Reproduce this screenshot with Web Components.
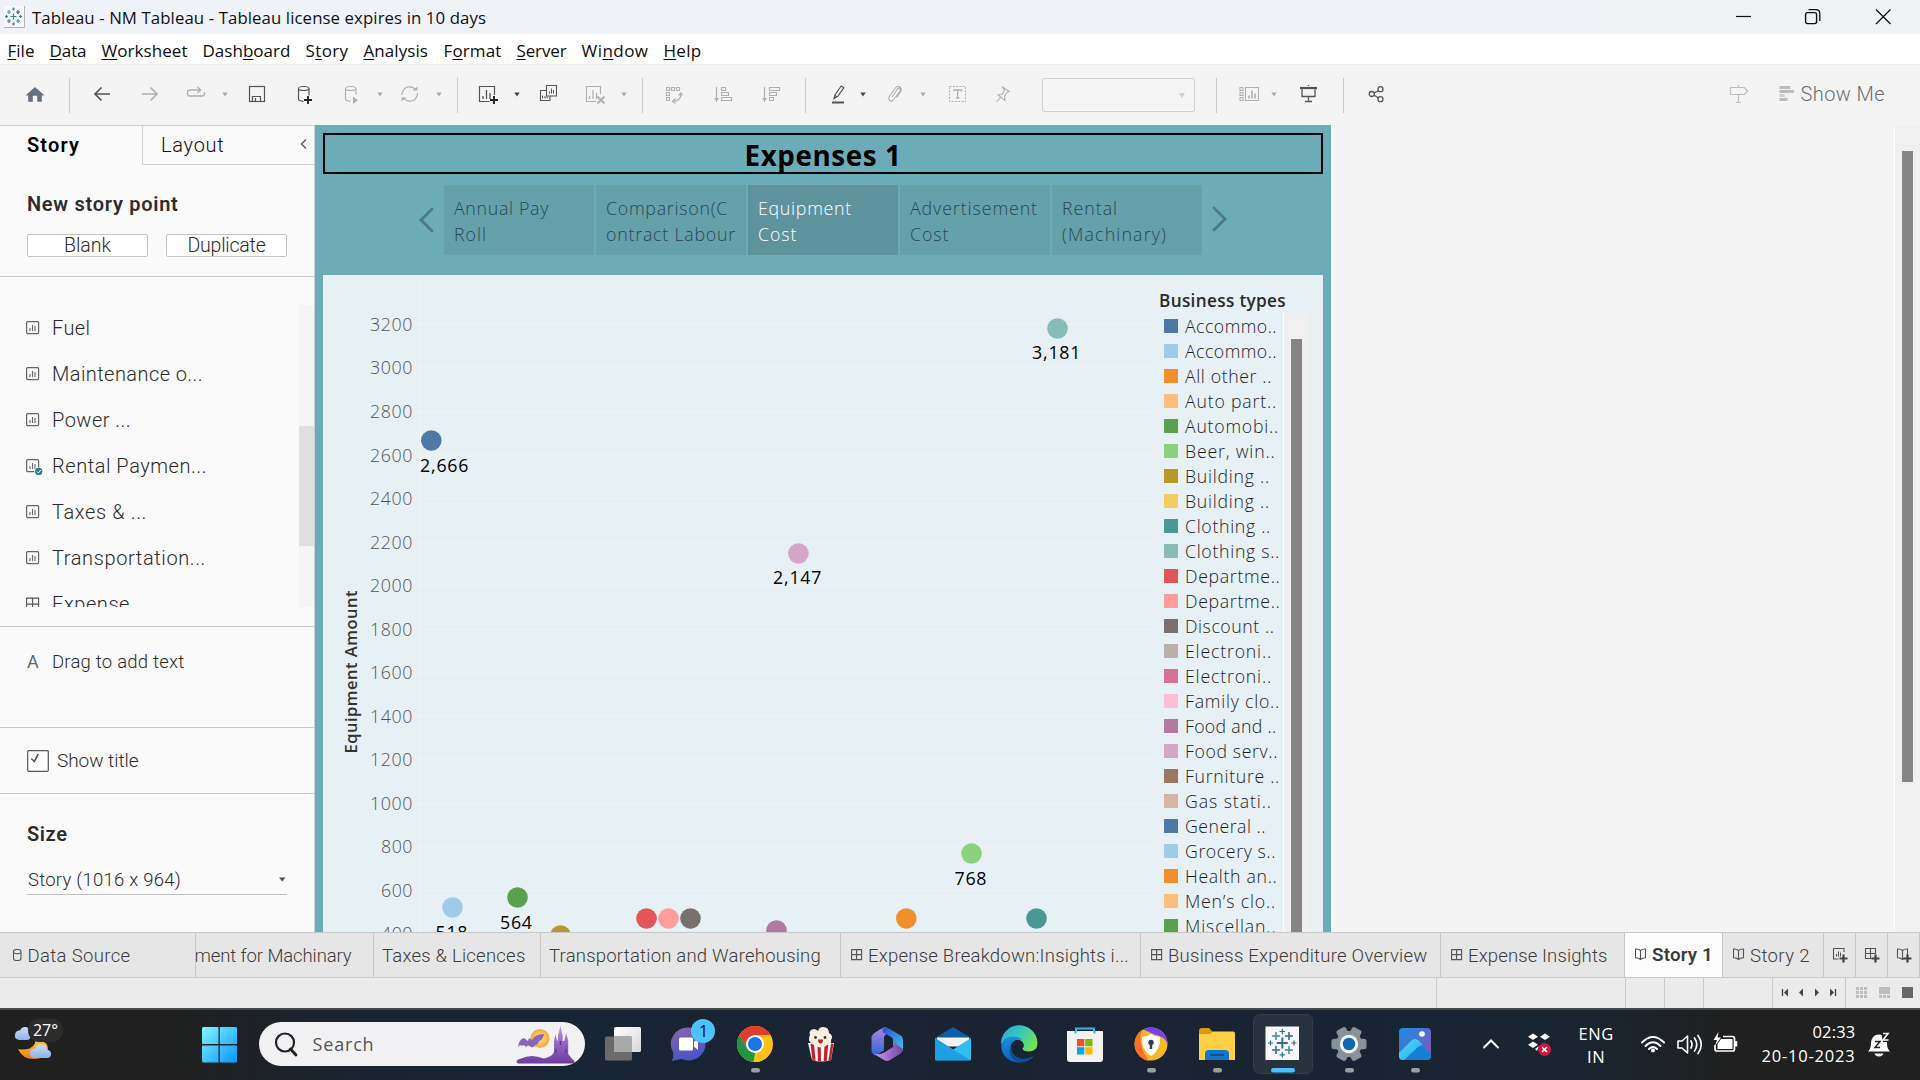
<!DOCTYPE html>
<html lang="en">
<head>
<meta charset="utf-8">
<title>Tableau - NM Tableau</title>
<style>
html,body{margin:0;padding:0;width:1920px;height:1080px;overflow:hidden;background:#f4f4f4}
body{font-family:"Open Sans","Liberation Sans",sans-serif}
</style>
</head>
<body>
<tableau-desktop></tableau-desktop>
<script>
const UI = '"Open Sans","Liberation Sans",sans-serif';
const BENTON = 'Roboto,"Liberation Sans",sans-serif';

// A shadow-rooted element whose markup and box rules are given by its class.
class Base extends HTMLElement {
  connectedCallback() {
    if (this.shadowRoot) return;
    this.attachShadow({ mode: 'open' }).innerHTML =
      `<style>*{box-sizing:border-box}svg{display:block;flex:none}${this.css()}</style>${this.html()}`;
    this.ready && this.ready();
  }
}

// One line of text tracked to a given advance width.
customElements.define('fit-text', class extends Base {
  css() { return ':host{display:block;flex:none;white-space:pre;position:static}span{display:inline-block}'; }
  html() { return '<span><slot></slot></span>'; }
  ready() {
    const w = +this.getAttribute('w'); if (!w) return;
    const s = this.shadowRoot.querySelector('span');
    const n = this.textContent.length;
    s.style.letterSpacing = ((w - s.getBoundingClientRect().width) / n).toFixed(3) + 'px';
  }
});

const T = (w, t, st = '') => `<fit-text w="${w}" style="${st}">${t}</fit-text>`;
// Lays [x, width, markup] items along a flex row, from a starting x.
const flow = (start, items) => {
  let p = start;
  return items.map(([x, w, m]) => { const g = x - p; p = x + w;
    return `<div class="it" style="margin-left:${g.toFixed(1)}px;width:${w}px">${m}</div>`; }).join('');
};
const pic = (x, y, w, h, m) => [x, w, `<svg width="${w}" height="${h}" viewBox="${x} ${y} ${w} ${h}" fill="none">${m}</svg>`];

customElements.define('title-bar', class extends Base {
  css() { return `:host{display:flex;align-items:center;height:34px;background:linear-gradient(90deg,#eff3f9,#eff3f8 60%,#f1f2f6);font:400 16.8px/34px ${UI};color:#101010}.it{flex:none}`; }
  html() {
    const plus = (x, y, r, c) => `<path d="M${x - r} ${y}h${2 * r}M${x} ${y - r}v${2 * r}" stroke="${c}" stroke-width="1.2"/>`;
    return flow(0, [
      pic(3, 0, 22, 34, `<path d="M4 6h20v21H4z" fill="#f8f8f8"/><path d="M4 27.5h20.5V6" stroke="#b5b5b5"/>` +
        plus(13.5, 16.5, 3, '#3c7fae') + plus(9, 12, 2, '#3c9ac8') + plus(18, 12, 2, '#2f6f9f') + plus(9, 21, 2, '#3c7fae') + plus(18, 21, 2, '#3c9ac8') + plus(13.5, 9, 1.5, '#3c7fae') + plus(13.5, 24, 1.5, '#3c7fae') + plus(6.5, 16.5, 1.5, '#3c7fae') + plus(20.5, 16.5, 1.5, '#3c7fae')),
      [32, 454, T(454, 'Tableau - NM Tableau - Tableau license expires in 10 days', 'padding-top:1px')],
      pic(1736, 0, 16, 34, '<path d="M1736 16.5h15" stroke="#111" stroke-width="1.2"/>'),
      pic(1804, 0, 18, 34, '<rect x="1805.6" y="12.6" width="11" height="11" rx="2" stroke="#111" stroke-width="1.4"/><path d="M1808.500 9.700h7.500q3.800 0 3.800 3.800v7.500" stroke="#111" stroke-width="1.3"/>'),
      pic(1875, 0, 17, 34, '<path d="M1876 9.500l14.500 14.500M1890.500 9.500l-14.500 14.500" stroke="#111" stroke-width="1.3"/>')
    ]);
  }
});

customElements.define('menu-bar', class extends Base {
  css() { return `:host{display:flex;height:30px;padding-top:2px;background:#fff;font:400 17px/29px ${UI};color:#0c0c0c}.it{flex:none}u{text-underline-offset:2px;text-decoration-thickness:1px;text-decoration-skip-ink:none}`; }
  html() {
    return flow(0, [['<u>F</u>ile', 7.5, 27], ['<u>D</u>ata', 49.5, 37], ['<u>W</u>orksheet', 101.5, 86], ['Dash<u>b</u>oard', 202.5, 88], ['S<u>t</u>ory', 305.5, 43], ['<u>A</u>nalysis', 363.5, 64.5], ['F<u>o</u>rmat', 443.5, 58], ['<u>S</u>erver', 516.5, 50], ['Wi<u>n</u>dow', 581.5, 67], ['<u>H</u>elp', 663.5, 38]].map(([t, x, w]) => [x, w, T(w, t)]));
  }
});

customElements.define('tool-bar', class extends Base {
  css() { return `:host{display:flex;height:61px;background:#f4f4f4;border-top:1px solid #ececec;font:300 20px/60px ${BENTON};color:#6f6f6f}.it{flex:none}.combo{width:153px;height:34px;margin-top:13px;border:1.5px solid #d2d2d2;border-radius:2px;background:#f5f5f5;padding:14px 9px 0 0;display:flex;justify-content:flex-end}.combo i{width:0;height:0;border:3.5px solid transparent;border-top:5px solid #cfcfcf;border-bottom:0}`; }
  html() {
    const p = (x, w, m) => pic(x, 65, w, 60, m);
    const sep = x => p(x, 2, `<path d="M${x + .5} 78v35" stroke="#c9c9c9"/>`);
    const car = (x, c = '#a9a9a9') => p(x - 3, 7, `<path d="M${x - 2.7} 92.500h5.400l-2.700 4z" fill="${c}"/>`);
    const D = '#555', L = '#b0b0b0';
    return flow(0, [
      p(25, 20, '<path d="M35 87l9.500 8.500h-2.700v6.300h-4.600v-6h-4.400v6h-4.600v-6.300h-2.700z" fill="#66707e"/>'),
      sep(69),
      p(93, 18, `<path d="M110 94H95.500M101.500 87.500L95 94l6.500 6.500" stroke="${D}" stroke-width="1.7"/>`),
      p(141, 18, `<path d="M142 94h14.500M150.500 87.500L157 94l-6.500 6.500" stroke="${L}" stroke-width="1.7"/>`),
      p(186, 20, `<path d="M200 90h-10q-2.500 0-2.500 2.500v1q0 2.500 2.500 2.500h12q2.500 0 2.500-2.500v-1.500M197.500 87l3.300 3-3.300 3" stroke="${L}" stroke-width="1.3"/>`),
      car(225),
      p(248, 18, `<rect x="249.500" y="86.500" width="15" height="15" stroke="${D}" stroke-width="1.2"/><path d="M252.500 101v-4.500h8v4.500M255.500 98v3" stroke="${D}" stroke-width="1.2"/>`),
      p(297, 17, `<path d="M298.500 88.500v10.500q0 2 5 2.300M309 88.500v7" stroke="${D}" stroke-width="1.2"/><ellipse cx="303.700" cy="88.500" rx="5.200" ry="2" stroke="${D}" stroke-width="1.1"/><path d="M304 100h8M308 96v8" stroke="#222" stroke-width="1.9"/>`),
      p(344, 16, `<path d="M345.500 88.500v10.500q0 2 5 2.300M356 88.500v6" stroke="${L}" stroke-width="1.2"/><ellipse cx="350.700" cy="88.500" rx="5.200" ry="2" stroke="${L}" stroke-width="1.1"/><path d="M353 96.500l5 3.700-5 3.700z" fill="${L}"/>`),
      car(380),
      p(400, 20, `<path d="M403 91a7 6.500 0 0 1 12.500-1M416.500 97a7 6.500 0 0 1-12.500 1M402 95a7 7 0 0 1 1-4M417.500 93a7 7 0 0 1-1 4" stroke="${L}" stroke-width="1.2"/><path d="M412.500 90.500h5v-4zM406.500 97.500h-5v4z" fill="${L}"/>`),
      car(439), sep(457),
      p(478, 21, `<path d="M494.500 95v-8.500h-15v15h10" stroke="${D}" stroke-width="1.2"/><path d="M483 99v-3M486.500 99v-9M490 99v-6" stroke="${D}" stroke-width="1.300"/><path d="M490 100h8M494 96v8" stroke="#222" stroke-width="1.900"/>`),
      car(517, '#444'),
      p(539, 19, `<path d="M546.500 85.500h10v10.500h-10zM546.500 90.500h-6v10h9.500v-4.500" stroke="${D}" stroke-width="1.100"/><path d="M549.500 93.500v-2M551.500 93.500v-5M553.500 93.500v-3.500M542.500 98.500v-3M545 98.500v-2.500M547.300 98.500v-2" stroke="${D}"/>`),
      p(585, 21, `<path d="M600.500 94v-7.500h-14v15h10" stroke="${L}" stroke-width="1.100"/><path d="M589.500 99v-3M593 99v-9M596.500 99v-6" stroke="${L}" stroke-width="1.200"/><path d="M597.500 96.500l7 7M604.500 96.500l-7 7" stroke="${L}" stroke-width="1.800"/>`),
      car(624), sep(642),
      p(664, 20, `<path d="M666.500 87.500h3v3h-3zM671.500 87.500h3v3h-3zM676.500 87.500h3v3h-3zM666.500 92.500h3v3h-3zM666.500 97.500h3v3h-3z" stroke="${L}" stroke-width="1.100"/><path d="M681 94q0 6.500-8 7.500M678.500 95.500l2.500-2.500 1.500 2.500M675.500 98.500l-3 3 3 2" stroke="${L}" stroke-width="1.200"/>`),
      p(713, 21, `<path d="M716.500 87v13" stroke="${L}" stroke-width="1.200"/><path d="M714 98h5l-2.500 4z" fill="${L}"/><path d="M721.500 87.500h4v3h-4zM721.500 92.500h7v3h-7zM721.500 97.500h10v3h-10z" stroke="${L}" stroke-width="1.100"/>`),
      p(761, 21, `<path d="M764.500 87v13" stroke="${L}" stroke-width="1.200"/><path d="M762 98h5l-2.500 4z" fill="${L}"/><path d="M769.500 87.500h10v3h-10zM769.500 92.500h7v3h-7zM769.500 97.500h4v3h-4z" stroke="${L}" stroke-width="1.100"/>`),
      sep(805),
      p(830, 18, `<path d="M834 98.500l1.200-4 6-8.500 2.600 1.800-6 8.500z M834.500 95l2.500 2" stroke="${D}" stroke-width="1.200"/><path d="M832 102.500h12" stroke="${D}" stroke-width="2"/>`),
      car(863, '#444'),
      p(887, 18, `<path d="M892 97l5.500-8q1.500-1.500 2.500-.5t0 2.500l-6.500 9q-2 2-3.700.5t-.5-4l6-8.500q2-2.500 4.500-1t1 4.500l-4 6" stroke="${L}" stroke-width="1.100"/>`),
      car(923),
      p(948, 20, `<rect x="949.500" y="86.500" width="16" height="15" stroke="${L}" stroke-dasharray="2 1.300"/><path d="M954 91.500v-1.500h7.500v1.500M957.700 90v8M956 98h3.500" stroke="${L}" stroke-width="1.300"/>`),
      p(995, 18, `<path d="M1002 86.500l7 5-2 1-2.500 3.500.5 4.500-7-5.500 4-.5 2.500-4zM1000.500 97.500l-4 4.500" stroke="${L}" stroke-width="1.100"/>`),
      [1042, 153, '<div class="combo"><i></i></div>'],
      sep(1216),
      p(1238, 22, `<path d="M1240 87.500h3v3h-3zM1240 92.500h3v3h-3zM1240 97.500h3v3h-3zM1245.500 87.500h13v13h-13z" stroke="${L}" stroke-width="1.100"/><path d="M1249 98.500v-3M1252 98.500v-8M1255 98.500v-5" stroke="${L}" stroke-width="1.600"/>`),
      car(1274),
      p(1299, 20, `<path d="M1300 88h17" stroke="${D}" stroke-width="2.200"/><path d="M1302 88v8.500h13V88M1308.500 86v-1M1308.500 96.500v5M1305 101.500h7" stroke="${D}" stroke-width="1.300"/>`),
      sep(1343),
      p(1367, 20, `<circle cx="1371.800" cy="94" r="2.500" stroke="${D}" stroke-width="1.300"/><circle cx="1380.500" cy="89.200" r="2.500" stroke="${D}" stroke-width="1.300"/><circle cx="1380.500" cy="99.200" r="2.500" stroke="${D}" stroke-width="1.300"/><path d="M1374.200 93l4-2.200M1374.200 95.300l4 2.400" stroke="${D}" stroke-width="1.300"/>`),
      p(1729, 20, `<path d="M1730.500 87.500h14l3 3.500-3 3.500h-14zM1738.500 87.500v-2.500M1738.500 94.500v7.500M1736 102.500h5" stroke="#bcbcbc" stroke-width="1.200"/>`),
      p(1778, 17, `<path d="M1779.500 86h11v3h-11zM1779.500 90h14.500v3h-14.500zM1779.500 98h8v3h-8z" fill="#bcbcbc"/><path d="M1779.500 94h5v3h-5z" fill="#cfcfcf"/>`),
      [1800.5, 85, T(84.5, 'Show Me', 'line-height:59px')]
    ]);
  }
});

const sheetIcon = (x, y, chk) => `<rect x="${x + .6}" y="${y + .6}" width="12" height="12" rx="1" stroke="#666" stroke-width="1.200"/><path d="M${x + 4} ${y + 10}v-3M${x + 6.500} ${y + 10}v-6M${x + 9} ${y + 10}v-5" stroke="#666" stroke-width="1.100"/>` + (chk ? `<circle cx="${x + 12.700}" cy="${y + 12.500}" r="4.300" fill="#fafafa"/><circle cx="${x + 12.700}" cy="${y + 12.500}" r="3.700" fill="#2f7ba0"/><path d="M${x + 10.900} ${y + 12.500}l1.500 1.500 2.400-3" stroke="#fff"/>` : '');
const dashIcon = (x, y, s) => `<path d="M${x + .6} ${y + .6}h${s}v${s}h-${s}zM${x + .6} ${y + .6 + s / 2}h${s}M${x + .6 + s / 2} ${y + .6}v${s}" stroke="#555" stroke-width="1.100"/>`;
const bookIcon = (x, y) => `<path d="M${x + 5.500} ${y + 2.500}v9M${x + 5.500} ${y + 2.500}q-2-1.800-5-1.500v8.700q3-.2 5 1.800q2-2 5-1.800V${y + 1}q-3-.3-5 1.500z" stroke="#555" stroke-width="1.100"/>`;

customElements.define('sheet-item', class extends Base {
  css() { return `:host{display:flex;align-items:center;height:46px;flex:none;padding-left:26px;gap:8px;font:300 20px/24px ${BENTON};color:#2c2c2c}`; }
  html() {
    const k = this.getAttribute('kind');
    return `<svg width="18" height="18" viewBox="0 2 18 18" fill="none">${k === 'dash' ? dashIcon(0, 4.500, 12) : sheetIcon(0, 4, k === 'used')}</svg><fit-text w="${this.getAttribute('w')}">${this.textContent}</fit-text>`;
  }
});

customElements.define('story-pane', class extends Base {
  css() { return `:host{display:flex;flex-direction:column;width:315px;flex:none;height:807px;background:#fafafa;border-right:1px solid #cfcfcf;border-top:1px solid #cfcfcf;font:300 20px/24px ${BENTON};color:#2c2c2c;overflow:hidden}
  .tabs{display:flex;height:39px;flex:none}.t1{width:142px;padding:7px 0 0 27px;font-weight:600;color:#000}.t2{flex:1;display:flex;justify-content:space-between;border-left:1px solid #cfcfcf;border-bottom:1px solid #cfcfcf;padding:7px 5px 0 18px;color:#111}
  section{flex:none;border-bottom:1px solid #cbcbcb}
  .new{height:112px;padding:27px 27px 0}h3{margin:0;font-size:20px;font-weight:600;line-height:24px;color:#2d2d2d}.btns{display:flex;gap:18px;margin-top:18px}
  .btn{width:121px;height:23px;border:1.200px solid #c4c4c4;border-radius:2px;background:#fff;display:flex;justify-content:center;line-height:21px;font-size:19.500px}
  .list{height:350px;padding:28px 0 0;display:flex}.items{height:302px;flex:1;overflow:hidden}.sb{width:15px;height:302px;background:#f5f5f5;padding-top:121px}.sb i{display:block;height:120px;background:#e0e0e0}
  .drag{height:101px;padding:23px 0 0 27px;display:flex;font-size:18.500px}.show{height:66px;display:flex;align-items:center;padding-left:27px;gap:8px;font-size:19px}
  .a{width:25px;color:#666;font-weight:400;font-size:18px}.size{padding:28px 27px 0}.sel{display:flex;justify-content:space-between;margin-top:22px;padding-left:1px;height:27px;border-bottom:1px solid #c2c2c2;font-size:18.500px}`; }
  html() {
    const it = (t, w, k = 'sheet') => `<sheet-item kind="${k}" w="${w}">${t}</sheet-item>`;
    return `<div class="tabs"><div class="t1">${T(53, 'Story')}</div><div class="t2">${T(63.5, 'Layout')}<svg width="10" height="24" viewBox="0 0 10 24" fill="none"><path d="M7 6.500L2.500 11l4.500 4.500" stroke="#666" stroke-width="1.500"/></svg></div></div>
    <section class="new"><h3>${T(151.500, 'New story point')}</h3><div class="btns"><div class="btn">${T(47, 'Blank')}</div><div class="btn">${T(78, 'Duplicate')}</div></div></section>
    <section class="list"><div class="items">${it('Fuel', 38.500) + it('Maintenance o...', 151) + it('Power ...', 79) + it('Rental Paymen...', 155, 'used') + it('Taxes &amp; ...', 95) + it('Transportation...', 154) + it('Expense', 78, 'dash')}</div><div class="sb"><i></i></div></section>
    <section class="drag"><span class="a">A</span>${T(132.500, 'Drag to add text')}</section>
    <section class="show"><svg width="22" height="22" viewBox="0 0 22 22" fill="none"><rect x=".7" y=".7" width="20.600" height="20.600" rx="1" fill="#fff" stroke="#555" stroke-width="1.200"/><path d="M4.300 8.500l3 3 4-7.500" stroke="#555" stroke-width="1.600"/></svg>${T(81.500, 'Show title')}</section>
    <div class="size"><h3>${T(40.500, 'Size')}</h3><div class="sel">${T(153, 'Story (1016 x 964)')}<svg width="10" height="24" viewBox="0 0 10 24"><path d="M2 9.500h6.500L5.200 13.500z" fill="#555"/></svg></div></div>`;
  }
});

customElements.define('story-point', class extends Base {
  css() { return `:host{display:block;width:150px;height:70px;background:#66a0ab;padding:10px 0 0 10px;font:300 17.800px/26px ${UI};color:#264a53;flex:none}:host([on]){background:#5e939e;color:#fff}`; }
  html() { return this.getAttribute('lines').split('|').map(l => { const [t, w] = l.split('~'); return T(w, t); }).join(''); }
});

customElements.define('scatter-chart', class extends Base {
  css() { return `:host{display:block;width:832px;flex:none}text{font-family:${UI};font-size:17.800px}`; }
  html() {
    let s = '';
    for (let v = 3200, y = 324.500; v >= 400; v -= 200, y += 43.540) {
      const yy = Math.floor(y - .06) + .5, w = v >= 1000 ? 42.500 : 31.500;
      s += `<path d="M416 ${yy}h738" stroke="#f0f1f2" stroke-width="1.300"/><text x="${412.500 - w}" y="${yy + 6.500}" textLength="${w}" fill="#555" font-weight="300">${v}</text>`;
    }
    s += '<path d="M420.500 283v649" stroke="#f3f4f5" stroke-width="1.300"/>';
    s += '<text transform="translate(357 753.500) rotate(-90)" textLength="163" font-weight="600" fill="#333" style="font-size:16.500px">Equipment Amount</text>';
    [[431.300, 440.500, '#4e79a7', '2,666', 420, 48.500, 31.500], [798.400, 553.500, '#d4a6c8', '2,147', 773, 48.500, 30.500], [1057.500, 328.500, '#86bcb6', '3,181', 1032, 48.500, 30.500], [971.500, 853.500, '#8cd17d', '768', 954.500, 32, 31.500], [452.500, 907.500, '#a0cbe8', '518', 435.500, 32, 31.500], [517.500, 897.500, '#59a14f', '564', 500, 32, 31.500], [560.500, 935.500, '#b6992d'], [646.500, 918.500, '#e15759'], [668.500, 918.500, '#ff9d9a'], [690.500, 918.500, '#79706e'], [776.500, 930.500, '#b07aa1'], [906.300, 918.500, '#f28e2b'], [1036.500, 918.500, '#499894']].forEach(([x, y, c, t, tx, w, d]) => {
      s += `<circle cx="${x}" cy="${y}" r="10.300" fill="${c}"/>`;
      if (t) s += `<text x="${tx}" y="${y + d}" textLength="${w}" fill="#000">${t}</text>`;
    });
    return `<svg width="832" height="657" viewBox="323 275 832 657" fill="none">${s}</svg>`;
  }
});

customElements.define('color-legend', class extends Base {
  css() { return `:host{display:block;width:151px;height:657px;overflow:hidden;margin-left:4px;font:300 17.700px/25px ${UI};color:#1f1f1f;flex:none}
  .h{font-weight:600;font-size:17.200px;padding-top:12.500px;height:38px;line-height:26px;color:#2a2a2a}.b{display:flex}.l{width:125px;border-right:1px solid #fff}.r{display:flex;align-items:center;padding-left:5px;height:25px;gap:7px}.r i{width:14px;height:14px}.r fit-text{margin-top:1.500px}
  .s{width:25px;height:619px;background:#f0f0f0;padding:26px 7px 0}.s i{display:block;height:600px;background:#858585}`; }
  html() {
    const rows = [['Accommo..', 1276, '4e79a7'], ['Accommo..', 1276, 'a0cbe8'], ['All other ..', 1271, 'f28e2b'], ['Auto part..', 1276, 'ffbe7d'], ['Automobi..', 1278, '59a14f'], ['Beer, win..', 1274.500, '8cd17d'], ['Building ..', 1269, 'b6992d'], ['Building ..', 1269, 'f1ce63'], ['Clothing ..', 1270, '499894'], ['Clothing s..', 1279, '86bcb6'], ['Departme..', 1279.500, 'e15759'], ['Departme..', 1279.500, 'ff9d9a'], ['Discount ..', 1273.500, '79706e'], ['Electroni..', 1271, 'bab0ac'], ['Electroni..', 1271, 'd37295'], ['Family clo..', 1279, 'fabfd2'], ['Food and ..', 1275.500, 'b07aa1'], ['Food serv..', 1277, 'd4a6c8'], ['Furniture ..', 1279, '9d7660'], ['Gas stati..', 1271, 'd7b5a6'], ['General ..', 1265, '4e79a7'], ['Grocery s..', 1275, 'a0cbe8'], ['Health an..', 1276.500, 'f28e2b'], ['Men’s clo..', 1275, 'ffbe7d'], ['Miscellan..', 1275.500, '59a14f']];
    return `<div class="h">${T(127, 'Business types')}</div><div class="b"><div class="l">${rows.map(([t, e, c]) => `<div class="r"><i style="background:#${c}"></i>${T(e - 1184, t)}</div>`).join('')}</div><div class="s"><i></i></div></div>`;
  }
});

customElements.define('story-view', class extends Base {
  css() { return `:host{display:block;width:1016px;height:807px;flex:none;background:#6cabb8;padding:8px;overflow:hidden}
  .t{height:41px;border:2px solid #000;display:flex;justify-content:center;font:700 27.800px/39px ${UI};color:#000;padding-top:1px}
  nav{display:flex;align-items:center;height:70px;margin-top:11px;padding-left:96px;gap:2px}nav svg{margin-top:-2px}.c{margin:0 8px 0 0}.d{margin-left:8px}
  .p{display:flex;height:657px;margin-top:20px;background:#e7f0f5;overflow:hidden}`; }
  html() {
    const chev = d => `<svg class="${d ? 'd' : 'c'}" width="15" height="26" viewBox="0 0 15 26" fill="none"><path d="${d ? 'M2 2l11 11L2 24' : 'M13 2L2 13l11 11'}" stroke="#4a7a84" stroke-width="2.800" stroke-linecap="round"/></svg>`;
    return `<div class="t">${T(157, 'Expenses 1')}</div>
    <nav>${chev(0)}<story-point lines="Annual Pay~95|Roll~33"></story-point><story-point lines="Comparison(C~122|ontract Labour~130"></story-point><story-point on lines="Equipment~94|Cost~39.500"></story-point><story-point lines="Advertisement~128|Cost~39.500"></story-point><story-point lines="Rental~56|(Machinary)~105"></story-point>${chev(1)}</nav>
    <div class="p"><scatter-chart></scatter-chart><color-legend></color-legend></div>`;
  }
});

customElements.define('scroll-track', class extends Base {
  css() { return ':host{display:block;width:26px;height:807px;flex:none;background:#f0f0f0;border-left:1px solid #fff;margin-left:auto;padding:26px 7px 0}i{display:block;height:631px;background:#858585}'; }
  html() { return '<i></i>'; }
});

customElements.define('sheet-tabs', class extends Base {
  css() { return `:host{display:flex;height:46px;border-top:1px solid #c8c8c8;border-bottom:1px solid #c8c8c8;background:#e6e6e6;font:300 18.500px/46px ${BENTON};color:#3c3c3c}.tab{flex:none;display:flex;height:44px;border-right:1px solid #c6c6c6;overflow:hidden}.it{flex:none}.on{background:#fcfcfc;font-weight:600;font-size:18.800px;line-height:44px}`; }
  html() {
    const p = (x, w, m) => pic(x, 933, w, 44, m);
    const tab = (a, b, items, on) => `<div class="tab${on ? ' on' : ''}" style="width:${b - a}px">${flow(a, items)}</div>`;
    const t = (x, e, s) => [x, e - x, T(e - x, s)];
    const pl = x => `<path d="M${x} 958.500h8M${x + 4} 954.500v8" stroke="#444" stroke-width="2.200"/>`;
    return tab(0, 196, [p(12, 11, '<rect x="13.500" y="949.500" width="7.500" height="11" rx="2.500" stroke="#555" stroke-width="1.100"/><path d="M13.500 953q3.700 1.800 7.500 0" stroke="#555"/>'), t(27.500, 130.500, 'Data Source')]) +
      tab(196, 374, [t(194.500, 351.500, 'ment for Machinary')]) + tab(374, 541, [t(382, 525.500, 'Taxes &amp; Licences')]) +
      tab(541, 841, [t(549, 821, 'Transportation and Warehousing')]) +
      tab(841, 1141, [p(851, 13, dashIcon(851, 949, 10)), t(868, 1129, 'Expense Breakdown:Insights i...')]) +
      tab(1141, 1441, [p(1151, 13, dashIcon(1151, 949, 10)), t(1168, 1427.500, 'Business Expenditure Overview')]) +
      tab(1441, 1625, [p(1451, 13, dashIcon(1451, 949, 10)), t(1468, 1607.500, 'Expense Insights')]) +
      tab(1625, 1723, [p(1635, 13, bookIcon(1635, 948)), t(1652, 1713, 'Story 1')], 1) +
      tab(1723, 1824, [p(1733, 13, bookIcon(1733, 948)), t(1750, 1810, 'Story 2')]) +
      tab(1824, 1856, [p(1832, 18, `<path d="M1844 952v-3.500h-10.500v10.500h5" stroke="#555" stroke-width="1.100"/><path d="M1836.500 956.500v-2.500M1838.500 956.500v-5M1840.500 956.500v-4" stroke="#555"/>` + pl(1839.500))]) +
      tab(1856, 1888, [p(1864, 18, `<path d="M1875.500 954v-5.500h-10v10h6M1865.500 953.500h10M1870.500 948.500v10" stroke="#555" stroke-width="1.100"/>` + pl(1871.500))]) +
      tab(1888, 1920, [p(1896, 18, bookIcon(1897, 948) + `<path d="M1904 956h6v5h-6z" fill="#e6e6e6"/>` + pl(1903.500))]);
  }
});

customElements.define('status-bar', class extends Base {
  css() { return ':host{display:flex;height:30px;background:#ebebeb}.it{flex:none}'; }
  html() {
    const p = (x, w, m) => pic(x, 978, w, 30, m), s = x => p(x, 1, `<path d="M${x + .5} 978v30" stroke="#c9c9c9"/>`);
    let g = '', h = '';
    for (let i = 0; i < 3; i++) { for (let j = 0; j < 3; j++) g += `<path d="M${1856 + 4 * i} ${987 + 4 * j}h3v3h-3z" fill="#bdbdbd"/>`; h += `<path d="M${1879 + 4 * i} 995h3v3h-3z" fill="#bdbdbd"/>`; }
    return flow(0, [s(1436), s(1625), s(1664), s(1703), s(1772),
      p(1781, 9, '<path d="M1782.500 989v7" stroke="#444" stroke-width="1.300"/><path d="M1788 988.500v8l-4-4z" fill="#444"/>'),
      p(1798, 7, '<path d="M1803 988.500v8l-4-4z" fill="#444"/>'), p(1814, 7, '<path d="M1815 988.500v8l4-4z" fill="#444"/>'),
      p(1829, 9, '<path d="M1835.500 989v7" stroke="#444" stroke-width="1.300"/><path d="M1830 988.500v8l4-4z" fill="#444"/>'),
      s(1845), p(1856, 12, g), p(1879, 12, '<path d="M1879 987h11v7h-11z" fill="#bdbdbd"/>' + h), p(1902, 12, '<path d="M1902 987h11v11h-11z" fill="#666"/>')]);
  }
});

customElements.define('task-bar', class extends Base {
  css() { return `:host{display:flex;height:72px;border-top:2px solid #474a4d;background:linear-gradient(90deg,#202020 0,#202020 9%,#1a2430 19%,#182534 30%,#1b2331 50%,#182433 70%,#1a2531 82%,#202020 90%);color:#fff;font:400 16.500px/24px ${UI}}.it{flex:none;height:70px}text{font-family:${UI}}
  .search{display:flex;align-items:center;width:326px;height:44px;margin-top:12px;border-radius:22px;background:#f2f2f4;padding:0 9px 0 15px;color:#555;font-size:18px}.lang{padding-top:11.500px;line-height:23px}.clock{padding-top:10px}.clock fit-text{text-align:right}`; }
  html() {
    const p = (x, w, m) => pic(x, 1010, w, 70, m);
    const dot = x => `<rect x="${x - 4.500}" y="1068" width="9" height="4.600" rx="2.300" fill="#9a9fa6"/>`;
    const plus = (x, y, r, w = 1.600, c = '#2f6d95') => `<path d="M${x - r} ${y}h${2 * r}M${x} ${y - r}v${2 * r}" stroke="${c}" stroke-width="${w}"/>`;
    const gear = (() => { let s = ''; for (let i = 0; i < 6; i++) s += `<rect x="1343.700" y="1026.500" width="10.600" height="10" rx="2.500" fill="#88929b" transform="rotate(${30 + i * 60} 1349 1044)"/>`; return s; })();
    return flow(0, [
      p(12, 54, `<defs><linearGradient id="m" x2="0" y2="1"><stop stop-color="#ffc83a"/><stop offset="1" stop-color="#ee7d18"/></linearGradient><linearGradient id="cl" x2="0" y2="1"><stop stop-color="#c9defc"/><stop offset="1" stop-color="#8db2ea"/></linearGradient></defs>
        <path d="M19 1040q-5-1-4-5.500t5-4q1.500-4 6-3.500 4 1 4 5 2 8-3 8z" fill="url(#cl)"/><path d="M38 1039q11 3 10 12-3 8-14 8-12 0-16-10 10 2 15-3 3-3 2-7z" fill="url(#m)"/><path d="M34 1058q-5-1-4-5.500t5-3.500q1-5 6-5 6 0 6 6 4 0 4 4t-4 4z" fill="url(#cl)"/><rect x="28" y="1018.500" width="35" height="23.500" rx="11.500" fill="#2c2c2c"/><text x="33" y="1036" font-size="16" textLength="25" fill="#fff">27°</text>`),
      p(200, 40, `<defs><linearGradient id="w" gradientUnits="userSpaceOnUse" x1="202" y1="1027" x2="237" y2="1062"><stop stop-color="#7df6ff"/><stop offset="1" stop-color="#0a96ff"/></linearGradient></defs><path d="M202 1028.500q0-1.500 1.500-1.500h15v17h-16.500zM219.800 1027h15.700q1.500 0 1.500 1.500v15.500h-17.200zM202 1045.500h16.500v17h-15q-1.500 0-1.500-1.500zM219.800 1045.500H237v15.500q0 1.500-1.500 1.500h-15.700z" fill="url(#w)"/>`),
      [259, 326, `<div class="search"><svg width="26" height="26" viewBox="274 1031 26 26" fill="none"><circle cx="285" cy="1042.500" r="9" stroke="#222" stroke-width="2.200"/><path d="M290.500 1049l5.500 6" stroke="#222" stroke-width="2.800" stroke-linecap="round"/></svg><fit-text w="62" style="margin-left:12.500px">Search</fit-text>
        <svg style="margin-left:auto" width="60" height="44" viewBox="516 1022 60 44" fill="none"><defs><linearGradient id="ca" x2="0" y2="1"><stop stop-color="#b79be6"/><stop offset=".5" stop-color="#8f62c2"/><stop offset="1" stop-color="#6f3d9c"/></linearGradient><radialGradient id="mo"><stop stop-color="#ffe08a"/><stop offset="1" stop-color="#f3a93f"/></radialGradient></defs><circle cx="540" cy="1038.500" r="9.500" fill="url(#mo)"/><path d="M518 1047q1-8 6-9l4 3 1-3 3 2q3-6 12-6-1 6-5 7-1 4-4 4-1 3-4 2-3-3-5 0-2-3-4-1-2-2-4 1z" fill="#8a64b8"/><path d="M560.500 1026l2.200 10v5h1.500l2-8 2 8v13l4 5q5 4 0 4.500H518q-4-3 3-5 10-5 23 0 9-2 10-7v-11l1.500-6 1.500 6h1v-5z" fill="url(#ca)"/><path d="M560.500 1041v4M556 1049v4M566 1049v4" stroke="#5b3590" stroke-width="1.300"/></svg></div>`],
      p(604, 38, `<defs><linearGradient id="tv" x2="1" y2="1"><stop stop-color="#fff"/><stop offset="1" stop-color="#d8d8d8"/></linearGradient></defs><rect x="614" y="1027" width="27" height="25" rx="1.500" fill="url(#tv)"/><rect x="605" y="1036.500" width="27" height="24" rx="1.500" fill="#6a6a6a"/><path d="M614 1036.500h18v15.500h-18z" fill="#a9a9a9"/>`),
      p(670, 46, `<defs><linearGradient id="ch" x2=".3" y2="1"><stop stop-color="#8c64a8"/><stop offset="1" stop-color="#4a55c8"/></linearGradient></defs><path d="M688.500 1027.500a17 16.500 0 1 1-7 31.500l-9.500 2q2-5 1-9a17 16.500 0 0 1 15.500-24.500z" fill="url(#ch)"/><rect x="679" y="1037.500" width="14" height="13" rx="1.500" fill="#fff"/><path d="M694 1042l4-3.500v11.500l-4-3.500z" fill="#fff"/><circle cx="703" cy="1031" r="12" fill="#4cc2ff"/><text x="699" y="1037" font-size="16" fill="#08131c">1</text>`),
      p(735, 40, `<circle cx="755" cy="1044" r="18" fill="#fbc116"/><path d="M739.400 1035L747.200 1048.500 755 1053l-1.500 9A18 18 0 0 1 739.400 1035z" fill="#229342"/><path d="M739.400 1035a18 18 0 0 1 31.200 0H755l-8 13z" fill="#e33b2e"/><path d="M753 1062l8-13.500h11a18 18 0 0 1-19 13.500z" fill="#fbc116"/><circle cx="755" cy="1044" r="9" fill="#fff"/><circle cx="755" cy="1044" r="7" fill="#1a73e8"/>${dot(755.500)}`),
      p(804, 34, `<path d="M808 1043h26l-3 17q-10 3-19 0z" fill="#f4f4f4"/><path d="M810.500 1044l2 16.500 3 .6-1.500-17zM817.500 1045l.5 16.500h3l-.3-16.500zM824.500 1045l-.8 16.500 3-.3 1.500-16.500zM831 1043.500l-2.500 17 2.500-.8 2.500-16z" fill="#c3202c"/><path d="M812 1044q-5-4-2-9-2-5 4-6 2 0 4 2 1-4 5-4 6 0 6 6 5 3 2 7 1 4-3 4-5 6-12 2z" fill="#faeedf"/><circle cx="815.500" cy="1037.500" r="1.400" fill="#432"/><circle cx="825" cy="1037.500" r="1.400" fill="#432"/><path d="M818 1039.500h5q0 4-2.500 4t-2.500-4z" fill="#b32430"/>`),
      p(869, 36, `<defs><linearGradient id="o1" x2="0" y2="1"><stop stop-color="#b784e8"/><stop offset="1" stop-color="#2867d8"/></linearGradient><linearGradient id="o2" x2="1" y2="1"><stop stop-color="#2a4fc4"/><stop offset="1" stop-color="#43c5f5"/></linearGradient><linearGradient id="o3" x2="1"><stop stop-color="#d692f2"/><stop offset="1" stop-color="#70479f"/></linearGradient></defs><path d="M885 1027q-13 6-13.500 10v14q.5 3 4 4.500l8.500-5V1038q0-3 4-5z" fill="url(#o1)"/><path d="M886 1027l14 8q3 1.500 3 5v11l-10-5v-6q0-2-2-3l-8-4.500q-2-4 3-5.500z" fill="url(#o2)"/><path d="M903 1049q0 3-3 5l-10 6q-3 1.800-6 0l-10-6q9 1 14-4l6-3.500q0 0 0-4z" fill="url(#o3)"/>`),
      p(934, 38, `<path d="M935 1038l18-11 18 11v4h-36z" fill="#0f5cab"/><path d="M937 1037.500h32v9h-32z" fill="#f2f2f2"/><path d="M935 1038l18 11.500 18-11.500v21q0 1.500-1.500 1.500h-33q-1.500 0-1.500-1.500z" fill="#33bdf3"/><path d="M953 1049.500l17.500 10.500h-34q-1.500 0-1.500-1.500V1038z" fill="#1e9fe4"/>`),
      p(1000, 38, `<defs><linearGradient id="e1" x2="1" y2=".5"><stop stop-color="#2ba6dc"/><stop offset=".55" stop-color="#36c9b9"/><stop offset="1" stop-color="#6fe05a"/></linearGradient><linearGradient id="e2" x2="0" y2="1"><stop stop-color="#1c8fdc"/><stop offset="1" stop-color="#0d5fb8"/></linearGradient></defs><path d="M1001 1044a18.200 18.200 0 0 1 36.500-1q0 8-8 8.500-7 0-7-3 2-2 1-5-2-4-8-4-8 0-14.500 4.500z" fill="url(#e1)"/><path d="M1001.200 1046q1-9 11-9.500 6-.5 10 3-9-1-11.500 6-1 7 5 11 8 5 18-.5-5 6-14 6.500-17-.5-18.500-16.500z" fill="url(#e2)"/><path d="M1012 1045q-2 8 4.500 12 8 4 17-.5-7 8-17 5-9-5-6-14z" fill="#0b4e97"/>`),
      p(1066, 38, `<path d="M1076 1032v-3.500h18v3.500" stroke="#38b6f1" stroke-width="2"/><path d="M1067 1031h36v28q0 3-3 3h-30q-3 0-3-3z" fill="#f3f3f3"/><path d="M1075.500 1031v2.500M1094.500 1031v2.500" stroke="#38b6f1" stroke-width="2"/><path d="M1077 1039h7.300v7.300h-7.300z" fill="#f25022"/><path d="M1085.200 1039h7.300v7.300h-7.300z" fill="#7fba00"/><path d="M1077 1047.200h7.300v7.300h-7.300z" fill="#00a4ef"/><path d="M1085.200 1047.200h7.300v7.300h-7.300z" fill="#ffb900"/>`),
      p(1132, 38, `<circle cx="1151" cy="1044" r="16.500" fill="#f7b928"/><path d="M1143 1029.500a16.500 17 0 0 1 24.500 15q-2-8-13-10z" fill="#7b3ff2"/><path d="M1143 1029.500q-4 6-2 14 2 10 8 17.500a17 17 0 0 1-6-31.500z" fill="#ff6f2c"/><path d="M1151 1034q4 3 9 3 1 13-9 19-10-6-9-19 5 0 9-3z" fill="#fff"/><circle cx="1151" cy="1042.500" r="2.700" fill="#333b57"/><path d="M1151 1043v6" stroke="#333b57" stroke-width="2.400"/>${dot(1151.500)}`),
      p(1198, 38, `<path d="M1199 1031q0-3 3-3h7l4 4h20v5h-34z" fill="#dc9a0e"/><path d="M1199 1034h11l3-2.500h20q2 0 2 2v26.500h-36z" fill="#ffd047"/><path d="M1205 1060v-6q0-4 4-4h16q4 0 4 4v6z" fill="#1177cc"/><path d="M1210 1055h14" stroke="#0a4f94" stroke-width="1.800"/>${dot(1217.500)}`),
      p(1253, 60, `<rect x="1253.500" y="1014.500" width="59" height="59" rx="6" fill="#29323f" stroke="#333d49"/><rect x="1265.500" y="1026.500" width="33.500" height="33.500" fill="#f7f7f7"/>${plus(1282.300, 1043, 5.500, 1.900) + plus(1276, 1036, 4, 1.500, '#3f86ad') + plus(1289, 1036, 4) + plus(1276, 1050, 4) + plus(1289, 1050, 4, 1.500, '#3f86ad') + plus(1282.300, 1031.500, 2.800, 1.200) + plus(1282.300, 1054.800, 2.800, 1.200) + plus(1270.500, 1043, 2.600, 1.200) + plus(1294, 1043, 2.600, 1.200)}<rect x="1271" y="1068" width="24" height="4.600" rx="2.300" fill="#4cc2ff"/>`),
      p(1330, 38, `${gear}<circle cx="1349" cy="1044" r="13" fill="#88929b"/><circle cx="1349" cy="1044" r="9.200" fill="#f4f4f4"/><circle cx="1349" cy="1044" r="6.200" fill="#1265b3"/>${dot(1349.500)}`),
      p(1397, 36, `<defs><linearGradient id="ph" x2="1" y2=".7"><stop stop-color="#1a8ce4"/><stop offset=".6" stop-color="#4a72cc"/><stop offset="1" stop-color="#8a55b8"/></linearGradient><linearGradient id="p2" x2="1" y2="1"><stop stop-color="#5de0ff"/><stop offset="1" stop-color="#19a5ea"/></linearGradient></defs><rect x="1399" y="1028" width="32" height="32" rx="4" fill="url(#ph)"/><path d="M1399 1053l13-13q3-2 6 0l4.500 4.500L1405 1060h-2q-4 0-4-4z" fill="url(#p2)"/><path d="M1404 1060l14-13q3-2.500 6 0l7 7v2q0 4-4 4z" fill="#1380d4"/><circle cx="1422" cy="1034" r="2.800" fill="#fff"/>${dot(1415.500)}`),
      p(1481, 20, '<path d="M1484 1047.500l7-7 7 7" stroke="#fff" stroke-width="2" stroke-linecap="round"/>'),
      p(1526, 28, '<path d="M1533 1033.500l5 3.300-5 3.300-5-3.300zM1545 1033.500l5 3.300-5 3.300-5-3.300zM1533 1041.500l5 3.300-5 3.300-5-3.300zM1539 1046l-4 3 2 2z" fill="#fff"/><circle cx="1544.500" cy="1049.500" r="6.500" fill="#d9123a"/><path d="M1542 1047l5 5M1547 1047l-5 5" stroke="#fff" stroke-width="1.700"/>'),
      [1578.500, 36, `<div class="lang">${T(35.500, 'ENG')}${T(18.500, 'IN', 'margin-left:8.5px')}</div>`],
      p(1640, 27, '<path d="M1642 1042.500q11-11 22 0M1645.500 1046q7.500-7.500 15 0M1649 1049q4-4 8 0" stroke="#fff" stroke-width="2" stroke-linecap="round"/><circle cx="1653" cy="1050.500" r="2" fill="#fff"/>'),
      p(1676, 27, '<path d="M1678 1041h4l5.500-5v17l-5.500-5h-4z" stroke="#fff" stroke-width="1.600" stroke-linejoin="round"/><path d="M1691 1041q2 3.500 0 7M1694.500 1038q4.500 6.500 0 13M1698 1035.500q6.500 9 0 18" stroke="#fff" stroke-width="1.700" stroke-linecap="round"/>'),
      p(1711, 28, '<path d="M1723 1036.500h9.500q2 0 2 2v10.500q0 2-2 2h-15.500q-2 0-2-2v-4" stroke="#fff" stroke-width="1.700"/><path d="M1721 1039h11.500v10h-15v-5z" fill="#fff"/><path d="M1735 1041h2.300v5.500h-2.300z" fill="#fff"/><path d="M1718.500 1032l-5 8h3.500l-2 6 6-8.500h-3.500z" fill="#fff"/>'),
      [1761.500, 94, `<div class="clock">${T(43, '02:33', 'margin-left:51px')}${T(94, '20-10-2023')}</div>`],
      p(1866, 26, '<path d="M1868 1051.500q3-3 3-8 .5-9 8-9 8 0 8 9 0 5 3 8zM1874.500 1053.500h9q-1 3-4.500 3t-4.500-3z" fill="#fff"/><path d="M1875 1041.500h5l-5 6h5" stroke="#202020" stroke-width="1.500"/><path d="M1881 1032h9v10h-7z" fill="#202020"/><path d="M1883 1033.500h5l-5 6.500h5.500" stroke="#fff" stroke-width="1.600"/>')
    ]);
  }
});

customElements.define('tableau-desktop', class extends Base {
  css() { return ':host{display:flex;flex-direction:column;width:1920px;height:1080px;overflow:hidden;background:#f4f4f4}main{display:flex;height:807px;flex:none}'; }
  html() { return '<title-bar></title-bar><menu-bar></menu-bar><tool-bar></tool-bar><main><story-pane></story-pane><story-view></story-view><scroll-track></scroll-track></main><sheet-tabs></sheet-tabs><status-bar></status-bar><task-bar></task-bar>'; }
});
</script>
</body>
</html>
